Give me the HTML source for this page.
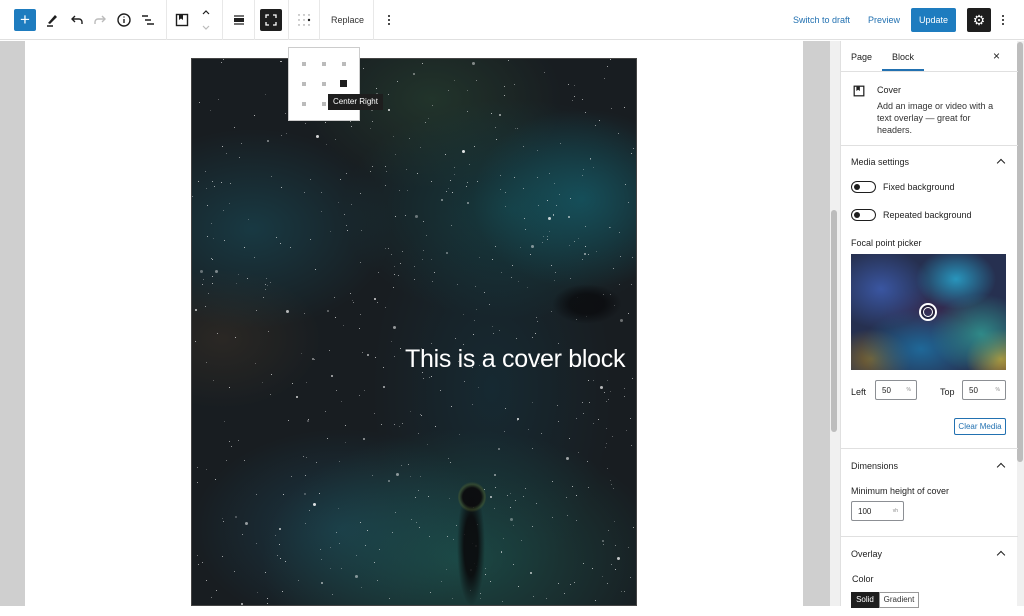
<!DOCTYPE html>
<html><head><meta charset="utf-8"><style>
*{box-sizing:border-box;margin:0;padding:0}
body{width:1024px;height:606px;overflow:hidden;background:#fff;font-family:"Liberation Sans",sans-serif;font-size:9px;color:#1e1e1e;position:relative}
.tb{position:absolute;left:0;top:0;width:1024px;height:40px;background:#fff;border-bottom:1px solid #e0e0e0}
.abs{position:absolute}
.sep{position:absolute;top:0;width:1px;height:40px;background:#e8e8e8}
.ic{position:absolute}
.cover{position:absolute;left:191px;top:58px;width:446px;height:548px;border:1px solid #444;overflow:hidden;
background:
radial-gradient(ellipse 110px 90px at 390px 140px,rgba(20,100,115,.6),transparent),
radial-gradient(ellipse 170px 110px at 320px 150px,rgba(20,85,90,.5),transparent),
radial-gradient(ellipse 140px 100px at 60px 170px,rgba(25,85,100,.5),transparent),
radial-gradient(ellipse 200px 130px at 270px 500px,rgba(30,105,95,.55),transparent),
radial-gradient(ellipse 150px 100px at 150px 470px,rgba(30,85,110,.45),transparent),
radial-gradient(ellipse 130px 90px at 240px 40px,rgba(45,80,55,.45),transparent),
radial-gradient(ellipse 120px 200px at 300px 330px,rgba(20,60,75,.4),transparent),
radial-gradient(ellipse 100px 70px at 30px 280px,rgba(70,55,40,.4),transparent),
#181d21}
.star{position:absolute;width:1px;height:1px;background:#fff;border-radius:50%}
.sb{position:absolute;left:840px;top:41px;width:177px;height:565px;background:#fff;border-left:1px solid #e0e0e0}
.sec{position:absolute;left:0;width:177px;border-top:1px solid #e0e0e0}
.chev{position:absolute;right:14px;width:6px;height:6px;border-left:1.5px solid #1e1e1e;border-top:1.5px solid #1e1e1e;transform:rotate(45deg)}
.tog{position:absolute;left:10px;width:25px;height:12px;border:1px solid #1e1e1e;border-radius:6px}
.tog:after{content:"";position:absolute;left:2px;top:2px;width:6px;height:6px;background:#1e1e1e;border-radius:50%}
.inp{position:absolute;border:1px solid #8c8f94;border-radius:2px;height:20px;font-size:8px;padding:5px 0 0 6px}
.inp span{position:absolute;right:5px;top:6px;font-size:5px;color:#888}
</style></head><body>
<div class="tb">
 <div class="abs" style="left:14px;top:9px;width:22px;height:22px;background:#1e7cbf;border-radius:2px;color:#fff;font-size:17px;line-height:21px;text-align:center">+</div>
 <svg class="ic" style="left:44px;top:12px" width="16" height="16" viewBox="0 0 16 16"><path d="M4 11 L11 3 L13 5 L6 12 Z" fill="#1e1e1e"/><path d="M3 14h6" stroke="#1e1e1e" stroke-width="1.5"/></svg>
 <svg class="ic" style="left:69px;top:12px" width="16" height="16" viewBox="0 0 16 16" fill="none" stroke="#1e1e1e" stroke-width="1.4"><path d="M6 4 L3 7 L6 10"/><path d="M3 7h7a3 3 0 0 1 3 3v2"/></svg>
 <svg class="ic" style="left:92px;top:12px" width="16" height="16" viewBox="0 0 16 16" fill="none" stroke="#bbb" stroke-width="1.4"><path d="M10 4 L13 7 L10 10"/><path d="M13 7H6a3 3 0 0 0-3 3v2"/></svg>
 <svg class="ic" style="left:116px;top:12px" width="16" height="16" viewBox="0 0 16 16" fill="none" stroke="#1e1e1e" stroke-width="1.4"><circle cx="8" cy="8" r="6"/><path d="M8 7v4M8 4.5v1"/></svg>
 <svg class="ic" style="left:140px;top:12px" width="16" height="16" viewBox="0 0 16 16" stroke="#1e1e1e" stroke-width="1.4"><path d="M2 4h6M5 8h6M7 12h7"/></svg>
 <div class="sep" style="left:166px"></div>
 <svg class="ic" style="left:174px;top:12px" width="16" height="16" viewBox="0 0 16 16"><rect x="2.5" y="2.5" width="11" height="11" fill="none" stroke="#1e1e1e" stroke-width="1.4"/><path d="M5 3h4v5l-2-1.5L5 8z" fill="#1e1e1e"/></svg>
 <svg class="ic" style="left:200px;top:6px" width="12" height="28" viewBox="0 0 12 28" fill="none" stroke-width="1.2"><path d="M3 8l3-3 3 3" stroke="#1e1e1e"/><path d="M3 20l3 3 3-3" stroke="#bbb"/></svg>
 <div class="sep" style="left:222px"></div>
 <svg class="ic" style="left:231px;top:12px" width="16" height="16" viewBox="0 0 16 16"><path d="M3 4h10M3 12h10" stroke="#1e1e1e" stroke-width="1.3"/><rect x="3" y="6" width="10" height="4" fill="#1e1e1e"/></svg>
 <div class="sep" style="left:254px"></div>
 <div class="abs" style="left:260px;top:9px;width:22px;height:22px;background:#1e1e1e;border-radius:2px"></div>
 <svg class="ic" style="left:263px;top:12px" width="16" height="16" viewBox="0 0 16 16" fill="none" stroke="#fff" stroke-width="1.3"><path d="M3 6V3h3M10 3h3v3M13 10v3h-3M6 13H3v-3"/></svg>
 <div class="sep" style="left:288px"></div>
 <svg class="ic" style="left:296px;top:12px" width="16" height="16" viewBox="0 0 16 16" fill="#888"><circle cx="3" cy="3" r=".7"/><circle cx="8" cy="3" r=".7"/><circle cx="13" cy="3" r=".7"/><circle cx="3" cy="8" r=".7"/><circle cx="8" cy="8" r=".7"/><circle cx="13" cy="8" r="1.2" fill="#1e1e1e"/><circle cx="3" cy="13" r=".7"/><circle cx="8" cy="13" r=".7"/><circle cx="13" cy="13" r=".7"/></svg>
 <div class="sep" style="left:319px"></div>
 <div class="abs" style="left:331px;top:15px;font-size:9px;color:#333">Replace</div>
 <div class="sep" style="left:373px"></div>
 <div class="abs" style="left:388px;top:14px;width:2px;height:12px;background:radial-gradient(circle,#1e1e1e 0.9px,transparent 1.1px) 0 0/2px 4px"></div>
 <div class="abs" style="left:793px;top:15px;color:#2271b1;font-size:9px">Switch to draft</div>
 <div class="abs" style="left:868px;top:15px;color:#2271b1;font-size:9px">Preview</div>
 <div class="abs" style="left:911px;top:8px;width:45px;height:24px;background:#1e7cbf;border-radius:2px;color:#fff;font-size:9px;text-align:center;line-height:24px">Update</div>
 <div class="abs" style="left:967px;top:8px;width:24px;height:24px;background:#1e1e1e;border-radius:2px;color:#fff;font-size:14px;text-align:center;line-height:24px">⚙</div>
 <div class="abs" style="left:1002px;top:14px;width:2px;height:12px;background:radial-gradient(circle,#1e1e1e 0.9px,transparent 1.1px) 0 0/2px 4px"></div>
</div>
<div class="abs" style="left:0;top:41px;width:25px;height:565px;background:#cfcfcf"></div>
<div class="abs" style="left:803px;top:41px;width:37px;height:565px;background:#cfcfcf"></div>
<div class="abs" style="left:830px;top:41px;width:10px;height:565px;background:#f0f0f0"></div>
<div class="abs" style="left:831px;top:210px;width:6px;height:222px;background:#bdbdbd;border-radius:3px"></div>
<div class="abs" style="left:1017px;top:41px;width:7px;height:565px;background:#f0f0f0"></div>
<div class="abs" style="left:1017px;top:42px;width:6px;height:420px;background:#bdbdbd;border-radius:3px"></div>
<div class="cover" id="cv">
 <div class="abs" style="left:262px;top:425px;width:34px;height:125px;border-radius:45% 45% 30% 30%;background:radial-gradient(ellipse 14px 60px at 17px 62px,rgba(10,10,12,.9) 50%,transparent);"></div>
 <div class="abs" style="left:266px;top:423px;width:28px;height:30px;border-radius:50%;background:radial-gradient(circle,rgba(12,12,14,.95) 45%,rgba(110,120,40,.3) 62%,transparent 75%)"></div>
 <div class="abs" style="left:360px;top:225px;width:70px;height:40px;border-radius:50%;background:radial-gradient(ellipse,rgba(10,11,14,.8) 35%,transparent 70%)"></div>
 <div class="abs" style="left:213px;top:286px;color:#fff;font-size:25px;letter-spacing:-.3px">This is a cover block</div>
</div>
<div class="abs" style="left:288px;top:47px;width:72px;height:74px;background:#fff;border:1px solid #ccc"></div>
<div class="abs" style="left:302px;top:62px;width:4px;height:4px;background:#bbb;box-shadow:20px 0 #bbb,40px 0 #bbb,0 20px #bbb,20px 20px #bbb,0 40px #bbb,20px 40px #bbb"></div>
<div class="abs" style="left:340px;top:80px;width:7px;height:7px;background:#1e1e1e"></div>
<div class="abs" style="left:328px;top:94px;width:55px;height:16px;background:#1e1e1e;color:#fff;font-size:8px;line-height:16px;text-align:center">Center Right</div>
<div class="sb">
 <div class="abs" style="left:10px;top:11px;font-size:9px">Page</div>
 <div class="abs" style="left:51px;top:11px;font-size:9px">Block</div>
 <div class="abs" style="left:41px;top:28px;width:42px;height:2px;background:#2271b1"></div>
 <div class="abs" style="left:152px;top:8px;font-size:12px">×</div>
 <div class="sec" style="top:30px;height:75px">
  <svg class="ic" style="left:11px;top:12px" width="14" height="14" viewBox="0 0 16 16"><rect x="2.5" y="2.5" width="11" height="11" fill="none" stroke="#1e1e1e" stroke-width="1.4"/><path d="M5 3h4v5l-2-1.5L5 8z" fill="#1e1e1e"/></svg>
  <div class="abs" style="left:36px;top:13px;font-size:9px">Cover</div>
  <div class="abs" style="left:36px;top:28px;width:125px;font-size:9px;line-height:12px;color:#333">Add an image or video with a text overlay — great for headers.</div>
 </div>
 <div class="sec" style="top:104px;height:304px">
  <div class="abs" style="left:10px;top:11px">Media settings</div><div class="chev" style="top:14px"></div>
  <div class="tog" style="top:35px"></div><div class="abs" style="left:42px;top:36px">Fixed background</div>
  <div class="tog" style="top:63px"></div><div class="abs" style="left:42px;top:64px">Repeated background</div>
  <div class="abs" style="left:10px;top:92px">Focal point picker</div>
  <div class="abs" style="left:10px;top:108px;width:155px;height:116px;background:
   radial-gradient(ellipse 40px 30px at 105px 25px,rgba(40,160,200,.9),transparent),
   radial-gradient(ellipse 50px 40px at 130px 80px,rgba(50,160,150,.8),transparent),
   radial-gradient(ellipse 35px 30px at 150px 105px,rgba(210,160,40,.9),transparent),
   radial-gradient(ellipse 60px 40px at 70px 95px,rgba(30,110,160,.9),transparent),
   radial-gradient(ellipse 50px 40px at 30px 35px,rgba(60,90,170,.9),transparent),
   radial-gradient(ellipse 40px 30px at 20px 105px,rgba(140,110,40,.8),transparent),
   radial-gradient(ellipse 50px 30px at 80px 60px,rgba(60,40,80,.8),transparent),
   #263050"></div>
  <div class="abs" style="left:78px;top:157px;width:18px;height:18px;border:2px solid #fff;border-radius:50%;box-shadow:inset 0 0 0 2px rgba(0,0,0,.3)"><div style="margin:2px;width:10px;height:10px;border:1px solid #fff;border-radius:50%"></div></div>
  <div class="abs" style="left:10px;top:241px">Left</div>
  <div class="inp" style="left:34px;top:234px;width:42px">50<span>%</span></div>
  <div class="abs" style="left:99px;top:241px">Top</div>
  <div class="inp" style="left:121px;top:234px;width:44px">50<span>%</span></div>
  <div class="abs" style="left:113px;top:272px;width:52px;height:17px;border:1px solid #2271b1;border-radius:2px;color:#2271b1;font-size:8px;text-align:center;line-height:15px">Clear Media</div>
 </div>
 <div class="sec" style="top:407px;height:89px">
  <div class="abs" style="left:10px;top:12px">Dimensions</div><div class="chev" style="top:15px"></div>
  <div class="abs" style="left:10px;top:37px">Minimum height of cover</div>
  <div class="inp" style="left:10px;top:52px;width:53px">100<span>vh</span></div>
 </div>
 <div class="sec" style="top:495px;height:80px">
  <div class="abs" style="left:10px;top:12px">Overlay</div><div class="chev" style="top:15px"></div>
  <div class="abs" style="left:11px;top:37px">Color</div>
  <div class="abs" style="left:10px;top:55px;width:28px;height:16px;background:#1e1e1e;color:#fff;font-size:8px;text-align:center;line-height:16px">Solid</div>
  <div class="abs" style="left:38px;top:55px;width:40px;height:16px;border:1px solid #999;font-size:8px;text-align:center;line-height:14px;color:#333">Gradient</div>
 </div>
</div>
<script>
var cv=document.getElementById('cv'),s=12345;function r(){s=(s*16807)%2147483647;return s/2147483647}
var h='';for(var i=0;i<600;i++){var x=r()*446,y=r()*548,z=r()<.9?1:(r()<.7?2:3),o=.3+r()*.6;h+='<div class="star" style="left:'+x.toFixed(0)+'px;top:'+y.toFixed(0)+'px;width:'+z+'px;height:'+z+'px;opacity:'+o.toFixed(2)+'"></div>'}
cv.insertAdjacentHTML('afterbegin',h);
</script>
</body></html>
